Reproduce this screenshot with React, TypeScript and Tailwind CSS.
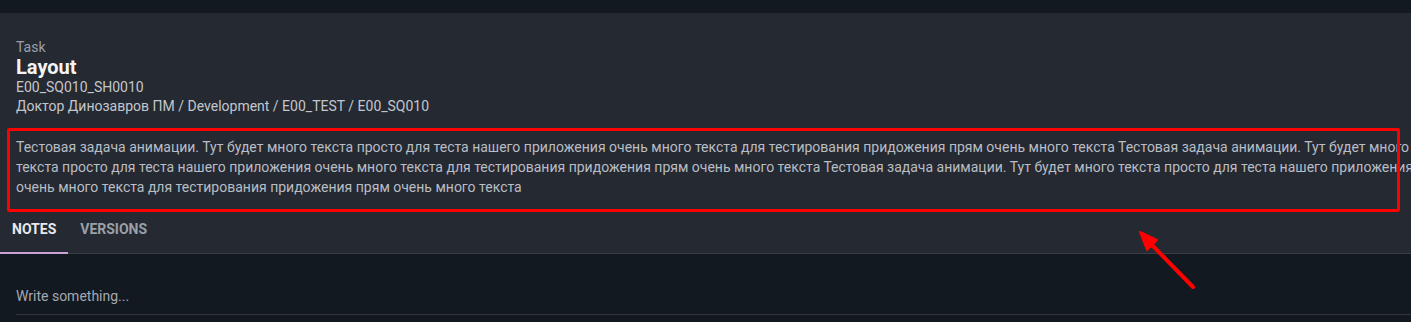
import React from "react";

const desc =
  "Тестовая задача анимации. Тут будет много текста просто для теста нашего приложения очень много текста для тестирования придожения прям очень много текста Тестовая задача анимации. Тут будет много текста просто для теста нашего приложения очень много текста для тестирования придожения прям очень много текста Тестовая задача анимации. Тут будет много текста просто для теста нашего приложения очень много текста для тестирования придожения прям очень много текста";

export default function App() {
  return (
    <div
      className="relative w-[1411px] h-[322px] overflow-hidden bg-[#131920]"
      style={{ fontFamily: "Roboto, 'Liberation Sans', sans-serif" }}
    >
      <div className="h-[13px] bg-[#131920]" />
      <div className="bg-[#252932]">
        <div className="pt-[26px] pl-4">
          <div className="text-[14px] leading-[16px] text-[#9aa0a8]">Task</div>
          <div className="text-[20px] leading-[24px] font-bold text-[#f2f4f6]">Layout</div>
          <div className="text-[14px] leading-[16px] text-[#c3c7cd]">E00_SQ010_SH0010</div>
          <div className="mt-[1px] text-[14px] leading-[20px] text-[#c3c7cd]">
            Доктор Динозавров ПМ / Development / E00_TEST / E00_SQ010
          </div>
        </div>
        <div className="pl-4 w-[1416px] pt-[21px] pb-[8px] text-[14px] leading-[20px] text-[#b9bdc4]">
          {desc}
        </div>
        <div className="flex border-b border-[#3a3e47]">
          <div className="relative px-3 h-[48px] flex items-center text-[14px] font-bold text-[#e8eaee]">
            NOTES
            <div className="absolute left-0 right-0 bottom-[-1px] h-[2px] bg-[#c9a3d8]" />
          </div>
          <div className="px-3 h-[48px] flex items-center text-[14px] font-bold text-[#9aa0a8]">
            VERSIONS
          </div>
        </div>
      </div>
      <div className="pl-4 pt-[32px]">
        <div className="text-[14px] leading-[20px] text-[#a3a8b0] pb-[8px] border-b border-[#30343c]">
          Write something...
        </div>
      </div>

      {/* annotation box */}
      <div className="absolute left-[7px] top-[128px] w-[1393px] h-[84px] border-[3px] border-[#ff0000] rounded-[2px]" />
      {/* annotation arrow */}
      <svg className="absolute left-0 top-0" width="1411" height="322" viewBox="0 0 1411 322">
        <line x1="1193" y1="287" x2="1150" y2="243" stroke="#ff0000" strokeWidth="4" strokeLinecap="round" />
        <polygon points="1140,232 1157,240 1147,250" fill="#ff0000" stroke="#ff0000" strokeWidth="2" strokeLinejoin="round" />
      </svg>
    </div>
  );
}
